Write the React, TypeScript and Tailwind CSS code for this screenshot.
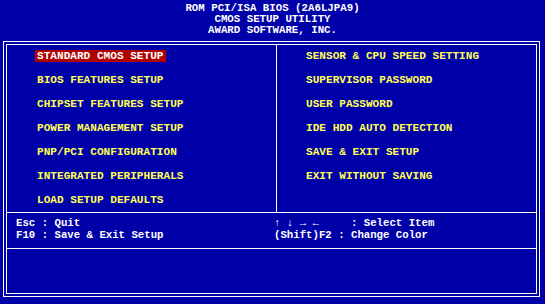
import React from 'react';

const leftItems = [
  'STANDARD CMOS SETUP',
  'BIOS FEATURES SETUP',
  'CHIPSET FEATURES SETUP',
  'POWER MANAGEMENT SETUP',
  'PNP/PCI CONFIGURATION',
  'INTEGRATED PERIPHERALS',
  'LOAD SETUP DEFAULTS',
];

const rightItems = [
  'SENSOR & CPU SPEED SETTING',
  'SUPERVISOR PASSWORD',
  'USER PASSWORD',
  'IDE HDD AUTO DETECTION',
  'SAVE & EXIT SETUP',
  'EXIT WITHOUT SAVING',
];

const MenuColumn: React.FC<{ items: string[]; selected?: number }> = ({ items, selected }) => (
  <div className="flex flex-col gap-[12px]">
    {items.map((item, i) => (
      <div key={item} className="flex">
        <span
          className={
            i === selected
              ? 'px-[2px] bg-[#b00000] text-white'
              : 'px-[2px] text-[#ffff55]'
          }
        >
          {item}
        </span>
      </div>
    ))}
  </div>
);

export default function App() {
  return (
    <div
      className="w-[545px] h-[304px] bg-[#0000a8] overflow-hidden font-bold"
      style={{ fontFamily: '"Liberation Mono", "DejaVu Sans Mono", monospace' }}
    >
      {/* Header */}
      <div className="pt-[3px] text-center text-white text-[10.75px] leading-[11px] whitespace-pre">
        <div>ROM PCI/ISA BIOS (2A6LJPA9)</div>
        <div>CMOS SETUP UTILITY</div>
        <div>AWARD SOFTWARE, INC.</div>
      </div>

      {/* Double frame */}
      <div className="mt-[5px] ml-[3px] w-[537px] h-[256px] border border-white p-[2px]">
        <div className="h-full border border-white flex flex-col">
          {/* Menu */}
          <div className="h-[168px] flex border-b border-white text-[11.1px] leading-[12px]">
            <div className="w-[270px] border-r border-white pt-[5px] pl-[28px]">
              <MenuColumn items={leftItems} selected={0} />
            </div>
            <div className="flex-1 pt-[5px] pl-[27px]">
              <MenuColumn items={rightItems} />
            </div>
          </div>

          {/* Key help */}
          <div className="h-[36px] flex border-b border-white pt-[4px] pl-[9px] text-white text-[10.7px] leading-[12px] whitespace-pre">
            <div className="w-[258px]">
              <div>Esc : Quit</div>
              <div>F10 : Save &amp; Exit Setup</div>
            </div>
            <div>
              <div>↑ ↓ → ←     : Select Item</div>
              <div>(Shift)F2 : Change Color</div>
            </div>
          </div>

          {/* Description area */}
          <div className="flex-1" />
        </div>
      </div>
    </div>
  );
}
